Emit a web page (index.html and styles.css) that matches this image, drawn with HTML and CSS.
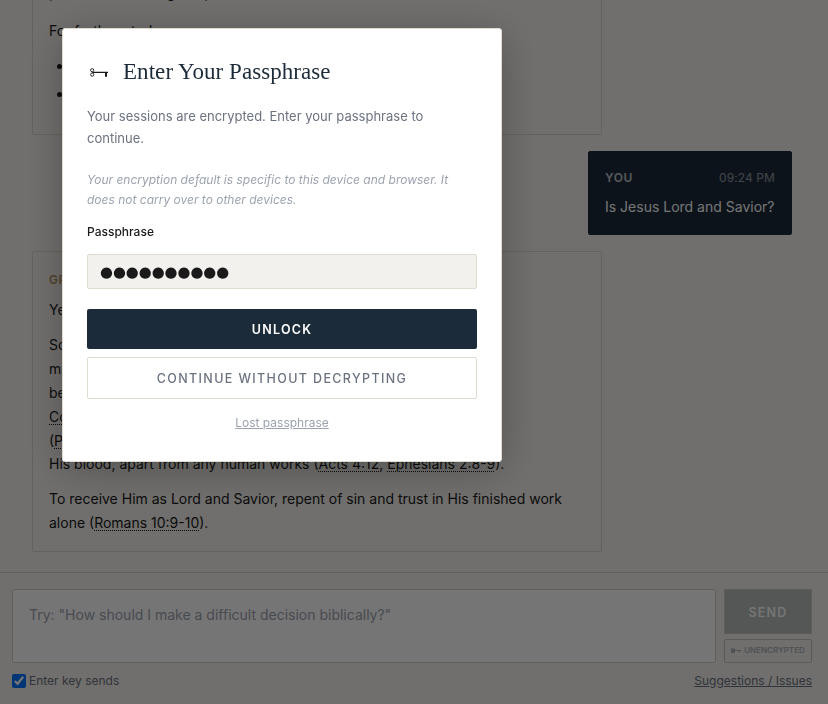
FILE: index.html
```html
<!DOCTYPE html>
<html lang="en">
<head>
    <meta charset="UTF-8">
    <meta name="viewport" content="width=device-width, initial-scale=1.0">
    <title>Enter Your Passphrase</title>
    <link rel="stylesheet" href="styles.css">
</head>
<body>
    <div class="app">
        <main class="messages">
            <div class="bubble-assistant bubble-early">
                <p>personal belief in grace, not works alone.</p>
                <p>For further study:</p>
                <ul>
                    <li>The Gospel of John</li>
                    <li>The Letter to the Romans</li>
                </ul>
            </div>

            <div class="bubble-user">
                <div class="bubble-head">
                    <span class="who">YOU</span>
                    <span class="time">09:24 PM</span>
                </div>
                <div class="bubble-text">Is Jesus Lord and Savior?</div>
            </div>

            <div class="bubble-assistant">
                <div class="who-assistant">GRACE</div>
                <p>Yes. Jesus Christ is both Lord and Savior.</p>
                <p>Scripture presents Him as the eternal Son of God, fully God and fully<br>
                    man (<a class="ref">John 1:1</a>, <a class="ref">14</a>), who died and rose again for the sins of all who<br>
                    believe, and who is confessed as Lord of all (<a class="ref">Romans 10:9</a>; <a class="ref">1<br>
                    Corinthians 15:3-4</a>). He alone is the source of our salvation and faith<br>
                    (<a class="ref">Philippians 2:9-11</a>). Salvation comes only from God through<br>
                    His blood, apart from any human works (<a class="ref">Acts 4:12</a>, <a class="ref">Ephesians 2:8-9</a>).</p>
                <p>To receive Him as Lord and Savior, repent of sin and trust in His finished work<br>
                    alone (<a class="ref">Romans 10:9-10</a>).</p>
            </div>
        </main>

        <footer class="composer">
            <div class="composer-row">
                <textarea class="prompt" placeholder="Try: &quot;How should I make a difficult decision biblically?&quot;"></textarea>
                <div class="composer-actions">
                    <button class="send" disabled>SEND</button>
                    <button class="lock-state">
                        <svg class="key-small" viewBox="0 0 10 6" width="10" height="6">
                            <rect x="0" y="0.5" width="4" height="4.500" fill="currentColor"/>
                            <path d="M3.500 2h6.500v1H9v1.500H8V3H3.500z" fill="currentColor"/>
                        </svg>
                        UNENCRYPTED
                    </button>
                </div>
            </div>
            <div class="composer-foot">
                <label class="enter-toggle"><input type="checkbox" checked> Enter key sends</label>
                <a class="feedback">Suggestions / Issues</a>
            </div>
        </footer>
    </div>

    <div class="overlay">
        <form class="modal">
            <h2>
                <svg class="key-icon" viewBox="0 0 18 9" width="18" height="9">
                    <circle cx="2.200" cy="2.200" r="1.600" fill="none" stroke="currentColor" stroke-width="0.9"/>
                    <circle cx="2.200" cy="6.600" r="1.600" fill="none" stroke="currentColor" stroke-width="0.9"/>
                    <path d="M2.200 3.800H18v1.300h-1v3.600h-2V5.100H2.200z" fill="currentColor"/>
                </svg>
                Enter Your Passphrase
            </h2>
            <p class="lead">Your sessions are encrypted. Enter your passphrase to continue.</p>
            <p class="hint">Your encryption default is specific to this device and browser. It does not carry over to other devices.</p>
            <label class="field-label" for="passphrase">Passphrase</label>
            <input class="field" type="text" id="passphrase" value="●●●●●●●●●●">
            <button type="button" class="btn-primary">UNLOCK</button>
            <button type="button" class="btn-secondary">CONTINUE WITHOUT DECRYPTING</button>
            <a class="lost">Lost passphrase</a>
        </form>
    </div>
</body>
</html>
```

FILE: styles.css
```css
* {
    box-sizing: border-box;
}
html, body {
    height: 100%;
    margin: 0;
}
body {
    font-family: Inter, "Liberation Sans", sans-serif;
    font-size: 14px;
    line-height: 1.7;
    color: #1a1a1a;
    background-color: #f3f1ed;
    overflow: hidden;
}
.app {
    height: 100%;
    display: flex;
    flex-direction: column;
}
.messages {
    flex: 1;
    min-height: 0;
    overflow: hidden;
    display: flex;
    flex-direction: column;
    justify-content: flex-end;
    gap: 16px;
    padding: 0 36px 20px 32px;
}
.bubble-assistant {
    flex: none;
    width: 570px;
    padding: 16px;
    background-color: #f3f1ed;
    border: 1px solid #dcd6cb;
    border-radius: 2px;
}
.bubble-assistant p {
    margin: 0 0 11.2px;
}
.bubble-assistant p:last-child {
    margin-bottom: 0;
}
.bubble-early p:first-child {
    margin-bottom: 14px;
}
.bubble-assistant ul {
    margin: 6px 0 12px;
    padding-left: 24px;
}
.bubble-assistant li {
    margin-bottom: 4px;
}
.who-assistant {
    font-size: 12px;
    line-height: 24px;
    font-weight: 600;
    letter-spacing: 0.6px;
    color: #b08d57;
    margin-bottom: 6px;
}
.ref {
    text-decoration: underline dotted 1px;
    text-underline-offset: 2px;
}
.bubble-user {
    flex: none;
    align-self: flex-end;
    width: 204px;
    padding: 16px;
    color: #fff;
    background-color: #1c2b3a;
    border: 1px solid #1c2b3a;
    border-radius: 2px;
}
.bubble-head {
    display: flex;
    justify-content: space-between;
    font-size: 12px;
    line-height: 20px;
    margin-bottom: 7px;
}
.bubble-text {
    white-space: nowrap;
}
.who {
    font-weight: 600;
    letter-spacing: 0.6px;
    opacity: 0.7;
}
.time {
    letter-spacing: 0.1px;
    opacity: 0.5;
}
.composer {
    flex: none;
    height: 132px;
    padding: 16px 16px 0 12px;
    border-top: 1px solid #d8d2c7;
}
.composer-row {
    display: flex;
    gap: 8px;
}
.prompt {
    flex: 1;
    height: 74px;
    padding: 13px 16px;
    font: inherit;
    background-color: #fff;
    border: 1px solid #d8d2c7;
    border-radius: 2px;
    resize: none;
}
.prompt::placeholder {
    color: #9ca3af;
}
.composer-actions {
    width: 88px;
    display: flex;
    flex-direction: column;
    gap: 5px;
}
.send {
    height: 45px;
    padding: 2px 0 0;
    font: inherit;
    font-size: 12.5px;
    font-weight: 600;
    letter-spacing: 1.25px;
    color: #fff;
    background-color: #b8bdbb;
    border: 1px solid #c8cac6;
    border-radius: 0;
}
.lock-state {
    height: 24px;
    padding: 0;
    display: flex;
    align-items: center;
    justify-content: center;
    gap: 3px;
    font: inherit;
    font-size: 8px;
    font-weight: 600;
    color: #adb2ba;
    background-color: #f3f1ed;
    border: 1px solid #c9c4ba;
    border-radius: 2px;
}
.composer-foot {
    display: flex;
    justify-content: space-between;
    align-items: center;
    margin-top: 8px;
    font-size: 12px;
    color: #6b7280;
}
.enter-toggle {
    display: flex;
    align-items: center;
    gap: 3px;
}
.enter-toggle input {
    width: 14px;
    height: 14px;
    margin: 0;
}
.feedback {
    text-decoration: underline;
}
.overlay {
    position: fixed;
    inset: 0;
    padding: 28px 62px;
    background-color: rgba(0, 0, 0, 0.54);
}
.modal {
    width: 440px;
    height: 434px;
    padding: 24px;
    display: flex;
    flex-direction: column;
    background-color: #fff;
    border: 1px solid #e0dbd0;
    border-radius: 3px;
    box-shadow: 0 8px 40px rgba(0, 0, 0, 0.25);
}
.modal h2 {
    display: flex;
    align-items: center;
    gap: 15px;
    margin: 0 0 14px;
    font-family: "Liberation Serif", serif;
    font-size: 23px;
    line-height: 38px;
    font-weight: 400;
    letter-spacing: 0.06px;
    color: #1c2b3a;
}
.key-icon {
    flex: none;
    margin-left: 3px;
    color: #1a1a1a;
}
.lead {
    margin: 0 0 21px;
    font-size: 13px;
    line-height: 22px;
    color: #6b7280;
}
.hint {
    margin: 0 0 12px;
    font-size: 12px;
    line-height: 20px;
    font-style: italic;
    color: #9ca3af;
}
.field-label {
    font-size: 12px;
    line-height: 20px;
    font-weight: 500;
    margin-bottom: 12px;
}
.field {
    height: 35px;
    padding: 0 12px;
    font-family: "DejaVu Sans", sans-serif;
    font-size: 14.8px;
    color: #1a1a1a;
    background-color: #f3f1ed;
    border: 1px solid #e0dbd0;
    border-radius: 2px;
}
.btn-primary {
    height: 40px;
    margin-top: 20px;
    padding: 1px 0 0;
    font: inherit;
    font-size: 12.5px;
    font-weight: 600;
    letter-spacing: 1.25px;
    color: #fff;
    background-color: #1c2b3a;
    border: none;
    border-radius: 2px;
}
.btn-secondary {
    height: 42px;
    margin-top: 8px;
    padding: 1px 0 0;
    font: inherit;
    font-size: 12.5px;
    font-weight: 500;
    letter-spacing: 1.36px;
    color: #6b7280;
    background-color: #fff;
    border: 1px solid #e0dbd0;
    border-radius: 2px;
}
.lost {
    align-self: center;
    margin-top: 14px;
    font-size: 12px;
    line-height: 20px;
    color: #9ca3af;
    text-decoration: underline;
}
```
